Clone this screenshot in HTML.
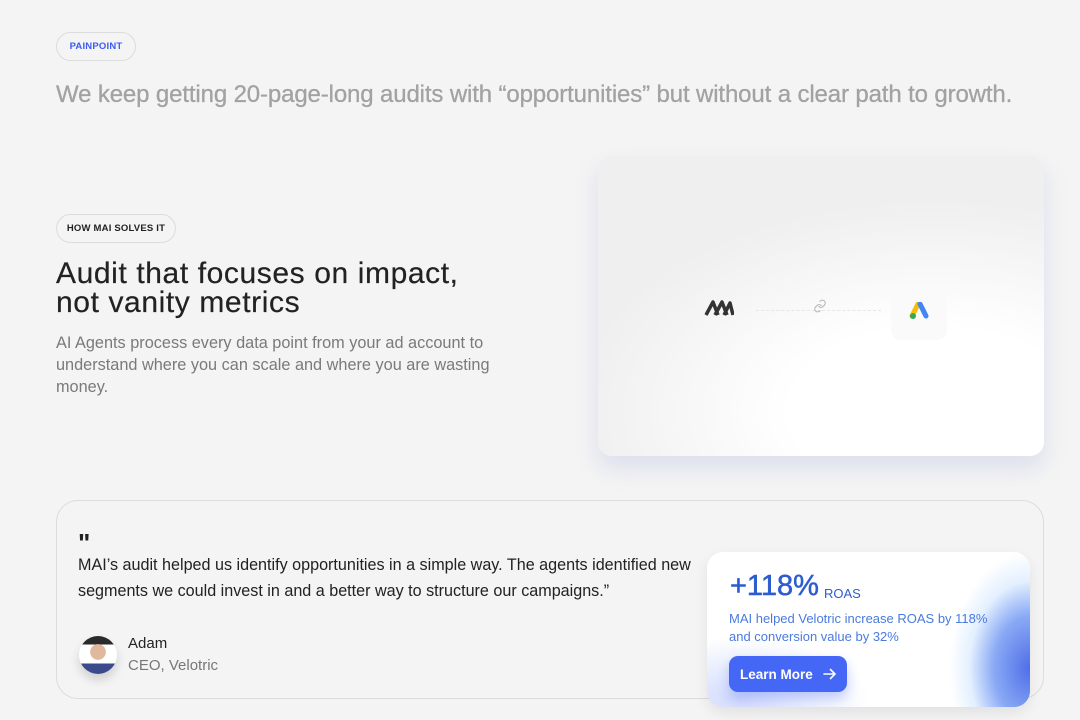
<!DOCTYPE html>
<html><head><meta charset="utf-8"><style>
*{box-sizing:border-box;margin:0;padding:0}
body{width:1080px;height:720px;background:#f4f4f4;font-family:"Liberation Sans",sans-serif;position:relative;overflow:hidden}
.pill{position:absolute;border:1px solid #dcdcdc;border-radius:16px;height:29px;font-size:9.5px;font-weight:bold;display:flex;align-items:center;justify-content:center;letter-spacing:.2px}
.a{position:absolute;white-space:nowrap}
</style></head><body>
<div class="pill" style="left:56px;top:32px;width:80px;color:#3a5cf5">PAINPOINT</div>
<div class="a" style="left:56px;top:81px;font-size:24px;color:#a2a2a2;letter-spacing:-0.13px;-webkit-text-stroke:0.3px #a2a2a2">We keep getting 20-page-long audits with “opportunities” but without a clear path to growth.</div>

<div class="pill" style="left:56px;top:214px;width:120px;color:#222">HOW MAI SOLVES IT</div>
<div class="a" style="left:56px;top:259px;font-size:30px;line-height:29px;color:#222;letter-spacing:0.6px;-webkit-text-stroke:0.2px #222">Audit that focuses on impact,<br>not vanity metrics</div>
<div class="a" style="left:56px;top:332px;font-size:16.3px;line-height:22px;color:#7a7a7a">AI Agents process every data point from your ad account to<br>understand where you can scale and where you are wasting<br>money.</div>

<div class="a" style="left:598px;top:156px;width:446px;height:300px;border-radius:14px;background:radial-gradient(ellipse 80% 70% at 75% 85%,#fff 40%,#f7f7f7 70%,#efefef 100%);box-shadow:0 12px 22px rgba(150,165,220,.25)">
  <svg class="a" style="left:106px;top:144px" width="30" height="16" viewBox="0 0 30 16" fill="none" stroke="#333" stroke-width="3.5" stroke-linejoin="round"><path d="M2 15 L9 2 L14 15 M11 15 L18 2 L23 15 M20 15 L26 3 L29 15"/></svg>
  <div class="a" style="left:158px;top:154px;width:125px;border-top:1px dashed #e6e6e6"></div>
  <svg class="a" style="left:215px;top:143px" width="14" height="14" viewBox="0 0 24 24" fill="none" stroke="#bbb" stroke-width="2" stroke-linecap="round"><path d="M10 13a5 5 0 0 0 7 0l3-3a5 5 0 0 0-7-7l-1 1"/><path d="M14 11a5 5 0 0 0-7 0l-3 3a5 5 0 0 0 7 7l1-1"/></svg>
  <div class="a" style="left:293px;top:130px;width:56px;height:54px;border-radius:10px;background:#fafafa"></div>
  <svg class="a" style="left:311px;top:146px" width="22" height="18" viewBox="0 0 22 18"><path d="M9 2 L3 14" stroke="#fbbc04" stroke-width="5" stroke-linecap="round"/><path d="M11 2 L17 14" stroke="#4285f4" stroke-width="5" stroke-linecap="round"/><circle cx="4" cy="14" r="3" fill="#34a853"/></svg>
</div>

<div class="a" style="left:56px;top:500px;width:988px;height:199px;border:1px solid #dcdcdc;border-radius:22px"></div>
<div class="a" style="left:78px;top:528px;font-size:26px;font-weight:bold;color:#222">"</div>
<div class="a" style="left:78px;top:552px;font-size:16.15px;line-height:26px;color:#222">MAI’s audit helped us identify opportunities in a simple way. The agents identified new<br>segments we could invest in and a better way to structure our campaigns.”</div>
<div class="a" style="left:79px;top:636px;width:38px;height:38px;border-radius:50%;background:radial-gradient(circle at 50% 42%,#e0b89c 0 26%,transparent 28%),linear-gradient(#2a2a2a 0 22%,#fff 22% 72%,#3a4a8a 72%);box-shadow:0 6px 10px rgba(0,0,0,.15)"></div>
<div class="a" style="left:128px;top:635px;font-size:15px;color:#222">Adam</div>
<div class="a" style="left:128px;top:657px;font-size:15px;color:#777">CEO, Velotric</div>

<div class="a" style="left:707px;top:552px;width:323px;height:155px;border-radius:16px;overflow:hidden;background:radial-gradient(ellipse 25% 75% at 100% 75%,#4f6ee8 0%,#8aaaf5 45%,rgba(200,225,255,.5) 75%,transparent 100%),radial-gradient(ellipse 40% 40% at 10% 95%,rgba(180,195,250,.6),transparent 100%),#fff;box-shadow:0 6px 14px rgba(0,0,0,.08)">
  <div class="a" style="left:23px;top:18px;font-size:29px;color:#2c5cd0;-webkit-text-stroke:0.5px #2c5cd0">+118%</div>
  <div class="a" style="left:117px;top:34px;font-size:13px;color:#2c5cd0">ROAS</div>
  <div class="a" style="left:22px;top:58px;font-size:13px;line-height:18px;color:#4a7ae0">MAI helped Velotric increase ROAS by 118%<br>and conversion value by 32%</div>
  <div class="a" style="left:22px;top:104px;width:118px;height:36px;border-radius:9px;background:#4567f5;color:#fff;font-size:13.5px;font-weight:bold;display:flex;align-items:center;padding-left:11px;box-shadow:0 6px 12px rgba(70,100,245,.3)">Learn More<svg style="margin-left:10px" width="14" height="12" viewBox="0 0 14 12" fill="none" stroke="#fff" stroke-width="1.6" stroke-linecap="round"><path d="M1 6h11M7.5 1.5 12 6l-4.5 4.5"/></svg></div>
</div>
</body></html>
